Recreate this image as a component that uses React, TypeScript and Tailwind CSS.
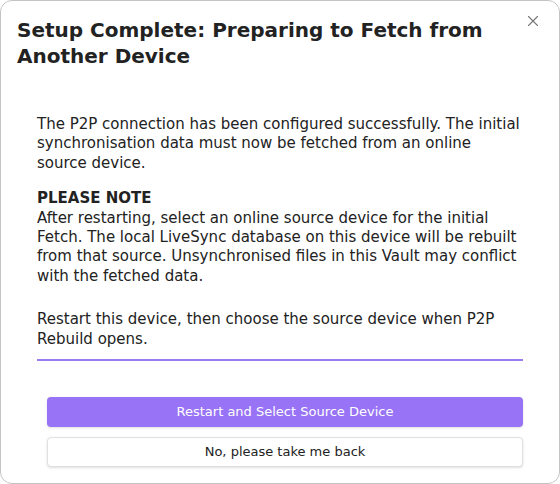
import { X } from "lucide-react";

export default function App() {
  return (
    <div
      className="w-[560px] h-[484px] bg-white"
      style={{ fontFamily: '"DejaVu Sans", sans-serif' }}
    >
      <div className="relative h-full border border-[#c4c4c4] rounded-[12px] bg-white text-[#222]">
        <button className="absolute right-[17px] top-[11px] text-[#777]">
          <X className="w-[18px] h-[18px]" strokeWidth={1.5} />
        </button>
        <div className="pl-[16px] pr-[50px] pt-[16px]">
          <h2 className="text-[20px] font-bold leading-[26px]">
            Setup Complete: Preparing to Fetch from Another Device
          </h2>
        </div>
        <div className="mt-[46px] mx-[36px] text-[15px] leading-[19.4px]">
          <p>
            The P2P connection has been configured successfully. The initial
            synchronisation data must now be fetched from an online source device.
          </p>
          <p className="mt-[16px]">
            <b>PLEASE NOTE</b>
            <br />
            After restarting, select an online source device for the initial
            Fetch. The local LiveSync database on this device will be rebuilt
            from that source. Unsynchronised files in this Vault may conflict
            with the fetched data.
          </p>
          <p className="mt-[24px]">
            Restart this device, then choose the source device when P2P Rebuild
            opens.
          </p>
          <div className="mt-[10px] h-[2px] bg-[#9b7bf0]" />
        </div>
        <div className="mt-[36px] ml-[46px] mr-[36px] flex flex-col gap-[10px] text-[13px]">
          <button className="h-[30px] rounded-[4px] bg-[#9873f5] text-white shadow-sm">
            Restart and Select Source Device
          </button>
          <button className="h-[30px] rounded-[4px] bg-white border border-[#e0e0e0] text-[#222] shadow-sm">
            No, please take me back
          </button>
        </div>
      </div>
    </div>
  );
}
